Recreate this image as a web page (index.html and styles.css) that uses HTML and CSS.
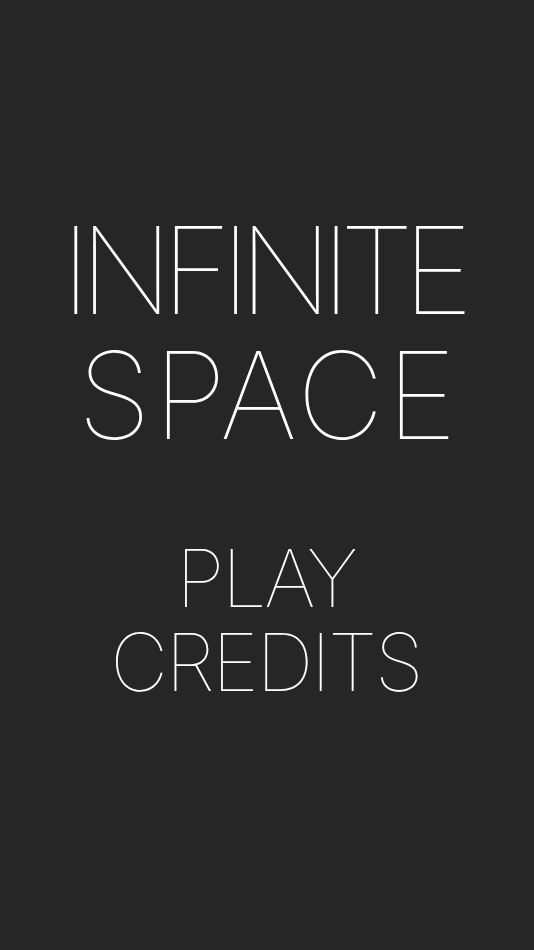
FILE: index.html
```html
<!DOCTYPE html>
<html>
<head>
<meta charset="utf-8">
<link rel="stylesheet" href="styles.css">
</head>
<body>
<div class="screen">
  <h1 class="title"><span class="line line-a">INFINITE</span><span class="line line-b">SPACE</span></h1>
  <nav class="menu">
    <a class="item">PLAY</a>
    <a class="item">CREDITS</a>
  </nav>
</div>
</body>
</html>
```
FILE: styles.css
```css
html, body {
  margin: 0;
  padding: 0;
  background: #262626;
}
.screen {
  width: 534px;
  height: 950px;
  display: flex;
  flex-direction: column;
  align-items: center;
  font-family: Inter, "Noto Sans", sans-serif;
  font-weight: 100;
  color: #ffffff;
  padding-top: 208px;
  box-sizing: border-box;
}
.title {
  margin: 0;
  display: flex;
  flex-direction: column;
  align-items: center;
  font-size: 121px;
  line-height: 125px;
  font-weight: 100;
}
.line {
  display: block;
}
.line-a {
  letter-spacing: -11.5px;
  margin-right: 11.5px;
}
.line-b {
  letter-spacing: 2px;
  margin-left: 2px;
}
.menu {
  margin-top: 78px;
  display: flex;
  flex-direction: column;
  align-items: center;
  font-size: 80px;
  line-height: 84px;
  letter-spacing: -2.6px;
}
.item {
  display: block;
  margin-right: 2.6px;
}
```
